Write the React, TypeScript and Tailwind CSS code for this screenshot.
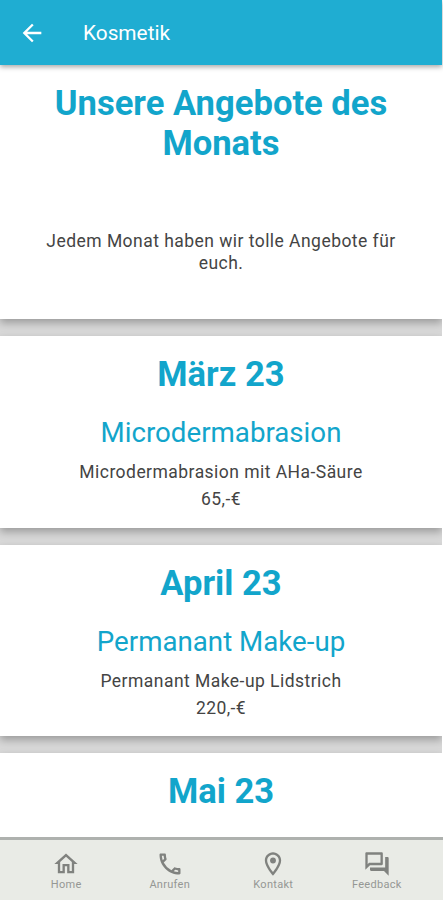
import type { IconType } from 'react-icons'
import { MdArrowBack, MdOutlineForum, MdOutlineHome, MdOutlineLocationOn, MdOutlinePhone } from 'react-icons/md'

interface Offer {
  month: string
  title?: string
  description?: string
  price?: string
}

const offers: Offer[] = [
  {
    month: 'März 23',
    title: 'Microdermabrasion',
    description: 'Microdermabrasion mit AHa-Säure',
    price: '65,-€',
  },
  {
    month: 'April 23',
    title: 'Permanant Make-up',
    description: 'Permanant Make-up Lidstrich',
    price: '220,-€',
  },
  { month: 'Mai 23' },
]

const tabs: { label: string; icon: IconType }[] = [
  { label: 'Home', icon: MdOutlineHome },
  { label: 'Anrufen', icon: MdOutlinePhone },
  { label: 'Kontakt', icon: MdOutlineLocationOn },
  { label: 'Feedback', icon: MdOutlineForum },
]

function OfferCard({ offer }: { offer: Offer }) {
  return (
    <section className="h-[191.5px] shrink-0 bg-white pt-[18px] text-center shadow-[0_4px_8px_rgba(0,0,0,0.28)]">
      <h2 className="text-[34.6px] leading-10 font-bold text-[#12a5cb]">{offer.month}</h2>
      {offer.title && (
        <h3 className="mt-[23px] text-[27.7px] leading-8 text-[#12a5cb]">{offer.title}</h3>
      )}
      {offer.description && (
        <p className="mt-3 text-[17.5px] leading-[22px] tracking-[0.46px] text-[#444]">{offer.description}</p>
      )}
      {offer.price && (
        <p className="mt-[5px] text-[17.5px] leading-[22px] tracking-[0.4px] text-[#444]">{offer.price}</p>
      )}
    </section>
  )
}

export default function App() {
  return (
    <div className="flex h-[900px] w-[443px] flex-col overflow-hidden bg-white font-[Roboto,sans-serif]">
      <header className="z-10 mr-px flex h-[65px] shrink-0 items-center bg-[#1fadd2] pt-px pl-[18px] text-white shadow-[0_2px_5px_rgba(0,0,0,0.35)]">
        <MdArrowBack className="size-7" />
        <h1 className="ml-[37px] text-[20.8px] leading-7">Kosmetik</h1>
      </header>

      <main className="mr-px flex min-h-0 flex-1 flex-col gap-[17px] overflow-hidden bg-[#d8d8d8]">
        <section className="h-[254px] shrink-0 bg-white px-10 pt-[18px] text-center shadow-[0_4px_8px_rgba(0,0,0,0.28)]">
          <h2 className="text-[34.6px] leading-10 font-bold text-[#12a5cb]">Unsere Angebote des Monats</h2>
          <p className="mt-[67px] text-[17.5px] leading-[22px] tracking-[0.46px] text-[#444]">
            Jedem Monat haben wir tolle Angebote für euch.
          </p>
        </section>
        {offers.map((offer) => (
          <OfferCard key={offer.month} offer={offer} />
        ))}
      </main>

      <nav className="z-10 flex h-[63px] shrink-0 border-t-[3px] border-[#aeb1ae] bg-[#e9ebe6] px-[14.5px] pt-[10px] text-[#80827f]">
        {tabs.map(({ label, icon: Icon }) => (
          <a key={label} className="flex flex-1 flex-col items-center">
            <Icon className="size-7" />
            <span className="mt-px text-[11px] leading-3 tracking-[0.3px] text-[#959794]">{label}</span>
          </a>
        ))}
      </nav>
    </div>
  )
}
